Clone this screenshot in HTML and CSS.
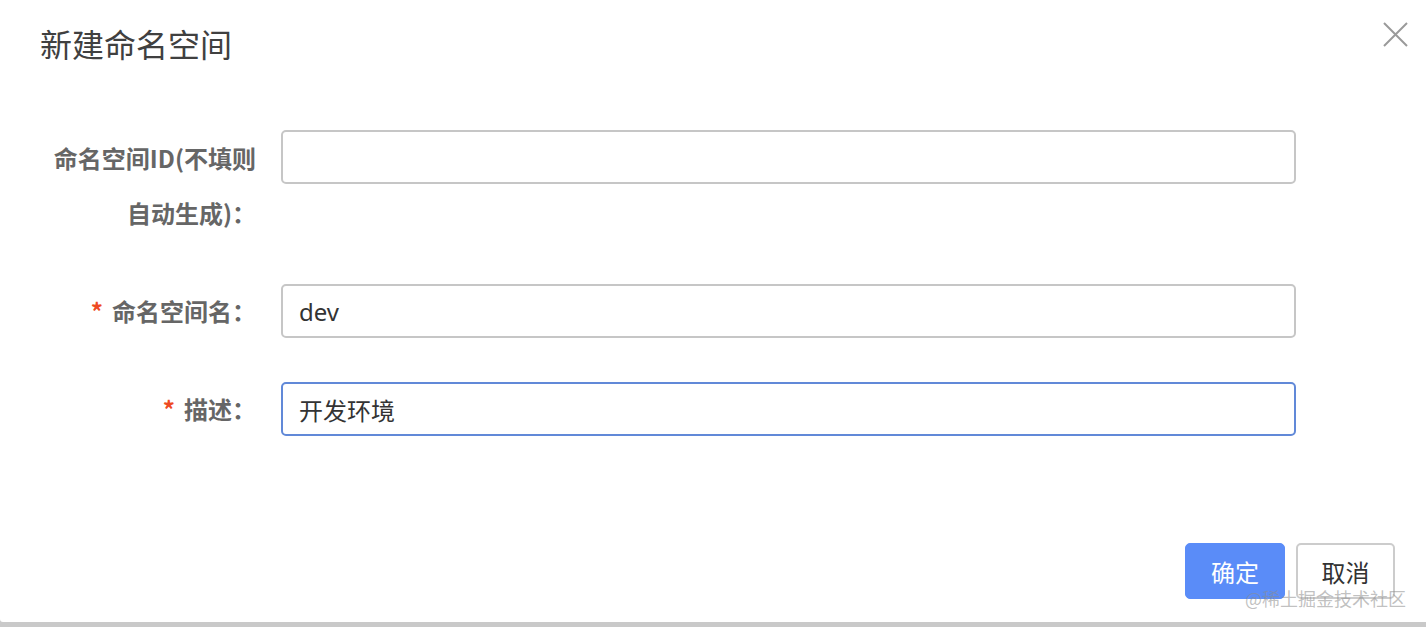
FILE: index.html
```html
<!DOCTYPE html>
<html lang="zh">
<head>
<meta charset="utf-8">
<title>新建命名空间</title>
<link rel="stylesheet" href="styles.css">
</head>
<body>
<div class="dialog">
  <div class="header">
    <div class="title">新建命名空间</div>
    <button class="close" aria-label="关闭">
      <svg width="25" height="25" viewBox="0 0 25 25"><path d="M1 1 L24 24 M24 1 L1 24" stroke="#9a9a9a" stroke-width="2" fill="none"/></svg>
    </button>
  </div>
  <form class="form">
    <div class="item item-tall">
      <label class="label">命名空间ID(不填则<br>自动生成)：</label>
      <div class="control"><input class="input" type="text" value=""></div>
    </div>
    <div class="item">
      <label class="label"><span class="req">*</span>命名空间名：</label>
      <div class="control"><input class="input" type="text" value="dev"></div>
    </div>
    <div class="item">
      <label class="label"><span class="req">*</span>描述：</label>
      <div class="control"><input class="input focused" type="text" value="开发环境"></div>
    </div>
  </form>
  <div class="footer">
    <button class="btn btn-primary">确定</button>
    <button class="btn btn-default">取消</button>
  </div>
  <div class="watermark">@稀土掘金技术社区</div>
</div>
</body>
</html>
```
FILE: styles.css
```css
html, body {
  margin: 0;
  padding: 0;
  background: #c9c9c9;
}
body {
  font-family: "Noto Sans", "Noto Sans CJK SC", sans-serif;
}
.dialog {
  position: relative;
  height: 622px;
  background: #ffffff;
  border-bottom-left-radius: 3px;
  box-sizing: border-box;
}
.header {
  display: flex;
  justify-content: space-between;
  align-items: flex-start;
  padding: 27px 18px 0 40px;
}
.title {
  font-size: 32px;
  line-height: 32px;
  color: #404040;
  font-family: "Noto Sans CJK SC", sans-serif;
}
.close {
  border: 0;
  background: none;
  padding: 0;
  margin-top: -5px;
  width: 25px;
  height: 25px;
  cursor: pointer;
}
.close svg { display: block; }
.form {
  margin-top: 71px;
  display: flex;
  flex-direction: column;
  gap: 44px;
}
.item {
  display: flex;
  align-items: flex-start;
}
.label {
  width: 281px;
  box-sizing: border-box;
  padding-right: 25px;
  text-align: right;
  font-size: 24px;
  line-height: 54px;
  font-weight: bold;
  color: #666666;
  font-family: "Noto Sans CJK SC", sans-serif;
}
.item-tall .label {
  line-height: 55px;
}
.req {
  color: #ee4a22;
  margin-right: 9px;
}
.control {
  width: 1015px;
}
.input {
  display: block;
  width: 100%;
  height: 54px;
  box-sizing: border-box;
  border: 2px solid #c6c6c6;
  border-radius: 5px;
  padding: 0 16px;
  font-size: 24px;
  color: #333333;
  font-family: "Noto Sans", "Noto Sans CJK SC", sans-serif;
  outline: none;
  background: #fff;
}
.input.focused {
  border-color: #6189d8;
}
.footer {
  display: flex;
  justify-content: flex-end;
  gap: 11px;
  padding-right: 31px;
  margin-top: 107px;
}
.btn {
  width: 100px;
  height: 56px;
  box-sizing: border-box;
  border-radius: 5px;
  font-size: 24px;
  font-family: "Noto Sans CJK SC", sans-serif;
  padding: 0;
  cursor: pointer;
}
.btn-primary {
  background: #5a8cf8;
  border: 1px solid #5a8cf8;
  color: #ffffff;
}
.btn-default {
  background: #ffffff;
  border: 2px solid #cccccc;
  color: #333333;
  width: 99px;
}
.watermark {
  position: absolute;
  right: 20px;
  bottom: 14px;
  font-size: 18px;
  line-height: 20px;
  color: rgba(140, 140, 140, 0.55);
  font-family: "Noto Sans CJK SC", sans-serif;
}
```
